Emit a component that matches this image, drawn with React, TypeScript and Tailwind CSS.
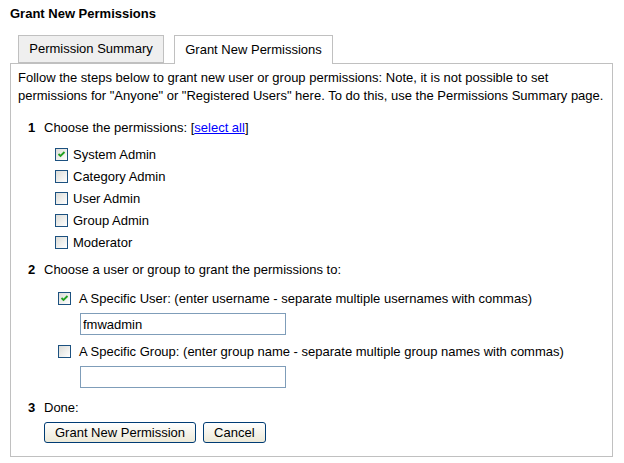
import React from "react";

const font = { fontFamily: '"Liberation Sans", Arial, sans-serif' };

function CheckBox({ checked }: { checked?: boolean }) {
  return (
    <span className="relative block w-[13px] h-[13px] mt-[4px] shrink-0 border border-[#1c5180] bg-gradient-to-br from-[#dcdcd7] to-white">
      {checked && (
        <svg viewBox="0 0 11 11" className="absolute inset-0 w-[11px] h-[11px]">
          <path d="M2.5 5 L4.5 7 L8.5 3" fill="none" stroke="#21a121" strokeWidth="1.8" />
        </svg>
      )}
    </span>
  );
}

const PERMS = [
  { label: "System Admin", checked: true },
  { label: "Category Admin" },
  { label: "User Admin" },
  { label: "Group Admin" },
  { label: "Moderator" },
];

function Step({ n, children }: { n: number; children: React.ReactNode }) {
  return (
    <div className="flex items-center h-[18px] pl-[10px]">
      <span className="w-[16px] font-bold">{n}</span>
      <span>{children}</span>
    </div>
  );
}

function XpButton({ children }: { children: React.ReactNode }) {
  return (
    <button className="h-[21px] px-[10px] rounded-[3px] border border-[#003c74] bg-gradient-to-b from-white to-[#ece9d8] text-[13px] leading-none text-black">
      {children}
    </button>
  );
}

export default function App() {
  return (
    <div className="w-[624px] h-[463px] bg-white text-[13px] text-black" style={font}>
      <div className="pt-[6px] px-[10px] font-bold leading-[16px]">Grant New Permissions</div>

      <div className="px-[10px] pt-[13px]">
        {/* tabs */}
        <div className="flex gap-[10px] pl-[8px] relative z-10">
          <div className="h-[28px] w-[146px] flex items-center justify-center border border-[#c0c0c0] bg-[#efefef] mb-[1px]">
            Permission Summary
          </div>
          <div className="h-[29px] w-[159px] flex items-center justify-center border border-b-0 border-[#c0c0c0] bg-white pb-[1px] -mb-[1px]">
            Grant New Permissions
          </div>
        </div>

        {/* panel */}
        <div className="w-[603px] h-[394px] -mt-[1px] border border-[#c0c0c0] pl-[7px] pt-[5px]">
          <p className="leading-[18px]">
            Follow the steps below to grant new user or group permissions: Note, it is not possible to set
            <br />
            permissions for "Anyone" or "Registered Users" here. To do this, use the Permissions Summary page.
          </p>

          <div className="mt-[14px]">
            <Step n={1}>
              Choose the permissions: [
              <a href="#" className="text-[#0000ff] underline">
                select all
              </a>
              ]
            </Step>
          </div>

          <div className="mt-[7px] pl-[37px]">
            {PERMS.map((p) => (
              <label key={p.label} className="flex items-start h-[22px] gap-[5px]">
                <CheckBox checked={p.checked} />
                <span className="leading-[22px]">{p.label}</span>
              </label>
            ))}
          </div>

          <div className="mt-[7px]">
            <Step n={2}>Choose a user or group to grant the permissions to:</Step>
          </div>

          <div className="pl-[40px]">
            <label className="flex items-start h-[22px] gap-[8px] mt-[9px]">
              <CheckBox checked />
              <span className="leading-[22px]">
                A Specific User: (enter username - separate multiple usernames with commas)
              </span>
            </label>
            <div className="pl-[22px] mt-[3px]">
              <input
                defaultValue="fmwadmin"
                className="w-[206px] h-[22px] border border-[#7f9db9] px-[2px] text-[13px] outline-none"
                style={font}
              />
            </div>
            <label className="flex items-start h-[22px] gap-[8px] mt-[6px]">
              <CheckBox />
              <span className="leading-[22px]">
                A Specific Group: (enter group name - separate multiple group names with commas)
              </span>
            </label>
            <div className="pl-[22px] mt-[3px]">
              <input
                className="w-[206px] h-[22px] border border-[#7f9db9] px-[2px] text-[13px] outline-none"
                style={font}
              />
            </div>
          </div>

          <div className="mt-[11px]">
            <Step n={3}>Done:</Step>
          </div>

          <div className="flex gap-[7px] pl-[26px] mt-[5px]">
            <XpButton>Grant New Permission</XpButton>
            <XpButton>Cancel</XpButton>
          </div>
        </div>
      </div>
    </div>
  );
}
